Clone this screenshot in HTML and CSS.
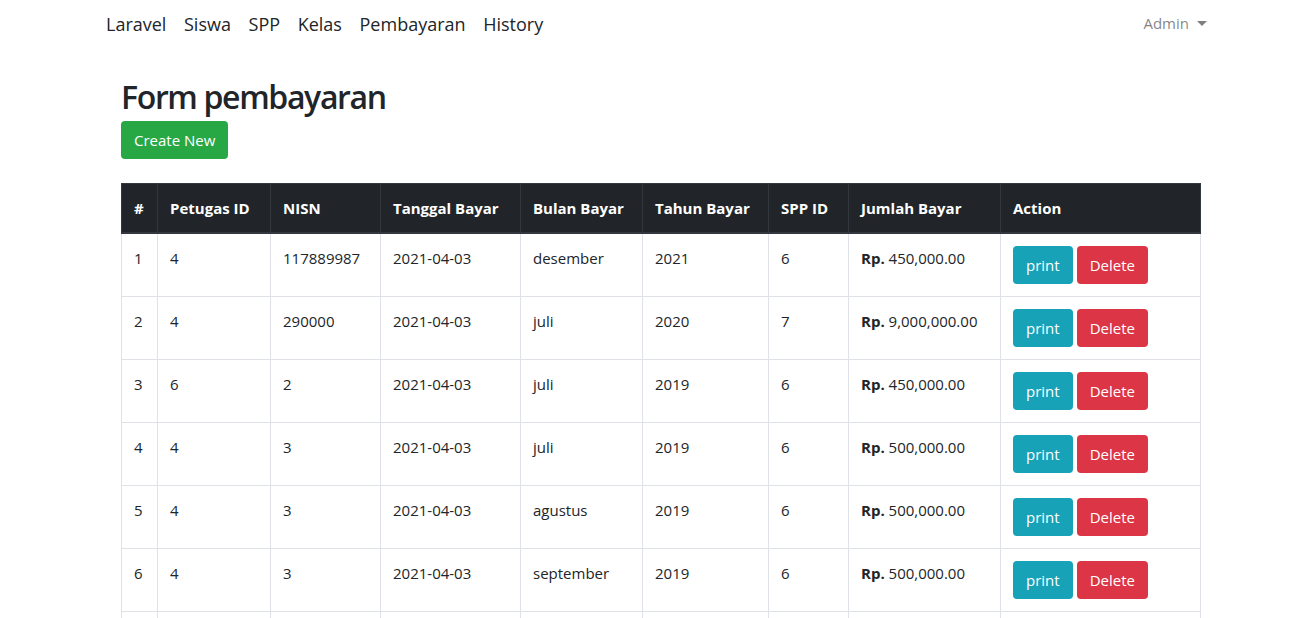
FILE: index.html
```html
<!DOCTYPE html>
<html lang="id">
<head>
<meta charset="utf-8">
<title>Form pembayaran</title>
<link rel="stylesheet" href="styles.css">
</head>
<body>
<nav class="navbar">
  <div class="nav-left">
    <a class="nav-brand" href="#">Laravel</a>
    <a class="nav-item" href="#">Siswa</a>
    <a class="nav-item" href="#">SPP</a>
    <a class="nav-item" href="#">Kelas</a>
    <a class="nav-item" href="#">Pembayaran</a>
    <a class="nav-item" href="#">History</a>
  </div>
  <a class="nav-user" href="#">Admin<span class="caret"></span></a>
</nav>
<main class="content">
  <h1 class="title">Form pembayaran</h1>
  <a class="btn btn-success" href="#">Create New</a>
  <table class="table">
    <colgroup>
      <col class="c1"><col class="c2"><col class="c3"><col class="c4"><col class="c5"><col class="c6"><col class="c7"><col class="c8"><col class="c9">
    </colgroup>
    <thead>
      <tr><th>#</th><th>Petugas ID</th><th>NISN</th><th>Tanggal Bayar</th><th>Bulan Bayar</th><th>Tahun Bayar</th><th>SPP ID</th><th>Jumlah Bayar</th><th>Action</th></tr>
    </thead>
    <tbody>
      <tr><td>1</td><td>4</td><td>117889987</td><td>2021-04-03</td><td>desember</td><td>2021</td><td>6</td><td><b>Rp.</b> 450,000.00</td><td class="act"><a class="btn btn-info" href="#">print</a><a class="btn btn-danger" href="#">Delete</a></td></tr>
      <tr><td>2</td><td>4</td><td>290000</td><td>2021-04-03</td><td>juli</td><td>2020</td><td>7</td><td><b>Rp.</b> 9,000,000.00</td><td class="act"><a class="btn btn-info" href="#">print</a><a class="btn btn-danger" href="#">Delete</a></td></tr>
      <tr><td>3</td><td>6</td><td>2</td><td>2021-04-03</td><td>juli</td><td>2019</td><td>6</td><td><b>Rp.</b> 450,000.00</td><td class="act"><a class="btn btn-info" href="#">print</a><a class="btn btn-danger" href="#">Delete</a></td></tr>
      <tr><td>4</td><td>4</td><td>3</td><td>2021-04-03</td><td>juli</td><td>2019</td><td>6</td><td><b>Rp.</b> 500,000.00</td><td class="act"><a class="btn btn-info" href="#">print</a><a class="btn btn-danger" href="#">Delete</a></td></tr>
      <tr><td>5</td><td>4</td><td>3</td><td>2021-04-03</td><td>agustus</td><td>2019</td><td>6</td><td><b>Rp.</b> 500,000.00</td><td class="act"><a class="btn btn-info" href="#">print</a><a class="btn btn-danger" href="#">Delete</a></td></tr>
      <tr><td>6</td><td>4</td><td>3</td><td>2021-04-03</td><td>september</td><td>2019</td><td>6</td><td><b>Rp.</b> 500,000.00</td><td class="act"><a class="btn btn-info" href="#">print</a><a class="btn btn-danger" href="#">Delete</a></td></tr>
      <tr class="empty"><td></td><td></td><td></td><td></td><td></td><td></td><td></td><td></td><td></td></tr>
    </tbody>
  </table>
</main>
</body>
</html>
```
FILE: styles.css
```css
* { box-sizing: border-box; }
html, body { margin: 0; padding: 0; background: #fff; }
body {
  font-family: "Open Sans", "Noto Sans", sans-serif;
  font-size: 15px;
  line-height: 24px;
  color: #212529;
}
a { text-decoration: none; }

.navbar {
  display: flex;
  justify-content: space-between;
  align-items: flex-start;
  padding: 9px 74px 0 98px;
  height: 48px;
}
.nav-left { display: flex; align-items: center; }
.nav-brand, .nav-item {
  font-size: 18px;
  line-height: 30px;
  color: #212529;
  padding: 0 8.8px;
}
.nav-brand { padding-left: 8px; }
.nav-user {
  color: rgba(0,0,0,.5);
  font-size: 15px;
  line-height: 24px;
  padding: 0 8px;
  margin-top: 2px;
  display: flex;
  align-items: center;
}
.caret {
  display: inline-block;
  margin-left: 8px;
  width: 0; height: 0;
  border-top: 5px solid rgba(0,0,0,.5);
  border-left: 5px solid transparent;
  border-right: 5px solid transparent;
}

.content {
  padding: 25px 0 0 121px;
  width: 1200px;
}
.title {
  margin: 0;
  font-size: 32px;
  font-weight: 600;
  line-height: 48px;
  letter-spacing: -1.35px;
}
.btn {
  display: inline-block;
  padding: 6px 12px;
  font-size: 15px;
  line-height: 24px;
  border-radius: 4px;
  color: #fff;
  border: 1px solid transparent;
}
.btn-success { background: #28a745; }
.btn-info { background: #17a2b8; }
.btn-danger { background: #dc3545; margin-left: 4px; }

.table {
  margin-top: 24px;
  width: 1079px;
  border-collapse: collapse;
  table-layout: fixed;
}
.c1 { width: 36px; } .c2 { width: 113px; } .c3 { width: 110px; } .c4 { width: 140px; }
.c5 { width: 122px; } .c6 { width: 126px; } .c7 { width: 80px; } .c8 { width: 152px; } .c9 { width: 200px; }
.table th, .table td {
  padding: 12px;
  text-align: left;
  vertical-align: top;
  border: 1px solid #dee2e6;
  white-space: nowrap;
}
.table th {
  background: #212529;
  color: #fff;
  font-weight: 700;
  border-color: #32383e;
  border-bottom: 2px solid #32383e;
}
.table tr.empty td { height: 63px; }
```
